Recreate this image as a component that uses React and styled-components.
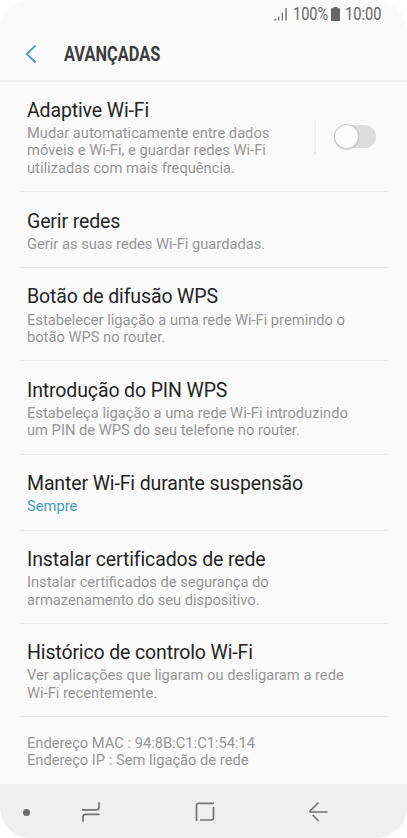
import React from "react";
import styled, { createGlobalStyle } from "styled-components";

const GlobalStyle = createGlobalStyle`
  * {
    box-sizing: border-box;
  }

  body {
    margin: 0;
    background: #fff;
    font-family: Roboto, "Liberation Sans", sans-serif;
  }
`;

const StyledPhone = styled.div`
  display: flex;
  flex-direction: column;
  width: 407px;
  height: 838px;
  overflow: hidden;
  border-radius: 31px;
  background: #fafafa;
`;

const StyledStatusBar = styled.div`
  display: flex;
  align-items: center;
  justify-content: flex-end;
  flex: none;
  height: 28px;
  padding-right: 25px;
  color: #666;
`;

const StyledStatusText = styled.span`
  width: ${(p) => p.$width}px;
  font-size: 17.5px;
  line-height: 20px;
  white-space: nowrap;

  span {
    display: inline-block;
    transform: scaleX(${(p) => p.$squeeze});
    transform-origin: left center;
  }
`;

const StyledSignal = styled.svg`
  margin-right: 5px;
`;

const StyledBattery = styled.svg`
  margin: 0 5px 0 3px;
`;

const StyledHeader = styled.header`
  display: flex;
  align-items: center;
  flex: none;
  height: 53.6px;
  padding-left: 25px;
  border-bottom: 2px solid #eee;
`;

const StyledBackIcon = styled.svg`
  margin-top: 1px;
`;

const StyledHeading = styled.h1`
  margin: 2px 0 0 27px;
  font-size: 19.5px;
  font-weight: 700;
  line-height: 24px;
  color: #3c3c3c;
  transform: scaleX(0.84);
  transform-origin: left center;
`;

const StyledList = styled.main`
  flex: 1;
  min-height: 0;
  padding: 0 20px;
`;

const StyledRow = styled.section`
  display: flex;
  padding: 17.3px 0 14px 7px;
  border-bottom: 1px solid #ebebeb;
`;

const StyledRowText = styled.div`
  flex: 1;
`;

const StyledTitle = styled.h2`
  margin: 0 0 2.2px;
  font-size: 19.5px;
  font-weight: 400;
  line-height: 24px;
  letter-spacing: -0.13px;
  color: #252525;
  white-space: nowrap;
`;

const StyledDescription = styled.p`
  margin: 0;
  font-size: 14.7px;
  line-height: 17.4px;
  color: ${(p) => (p.$active ? "#479db9" : "#969696")};
  white-space: pre;
`;

const StyledSwitchArea = styled.div`
  display: flex;
  align-items: center;
  align-self: flex-start;
  width: 73px;
  height: 34px;
  margin-top: 21px;
  padding-left: 18px;
  border-left: 2px solid #eee;
`;

const StyledSwitch = styled.button`
  display: flex;
  align-items: center;
  width: 42px;
  height: 23px;
  padding: 0;
  border: 0;
  border-radius: 12px;
  background: #dcdcdc;
`;

const StyledThumb = styled.span`
  flex: none;
  width: 25px;
  height: 25px;
  border: 1px solid #c8c8c8;
  border-radius: 50%;
  background: #fdfdfd;
  box-shadow: 0 1px 1px rgba(0, 0, 0, 0.15);
`;

const StyledAddresses = styled.div`
  padding: 17.5px 7px;
`;

const StyledNavBar = styled.nav`
  display: flex;
  align-items: center;
  flex: none;
  height: 54px;
  padding: 2px 0 0 23px;
  background: #efefef;
`;

const StyledDot = styled.span`
  flex: none;
  width: 7px;
  height: 7px;
  margin-right: 50px;
  border-radius: 50%;
  background: #6c6c6c;
`;

const StyledNavIcon = styled.svg`
  flex: none;
  width: 22px;
  height: 22px;
  margin-right: 92px;
  fill: none;
  stroke: #737373;
  stroke-width: 1.7;
`;

const settings = [
  {
    title: "Adaptive Wi-Fi",
    text: "Mudar automaticamente entre dados\nmóveis e Wi-Fi, e guardar redes Wi-Fi\nutilizadas com mais frequência.",
    hasSwitch: true,
  },
  { title: "Gerir redes", text: "Gerir as suas redes Wi-Fi guardadas." },
  {
    title: "Botão de difusão WPS",
    text: "Estabelecer ligação a uma rede Wi-Fi premindo o\nbotão WPS no router.",
  },
  {
    title: "Introdução do PIN WPS",
    text: "Estabeleça ligação a uma rede Wi-Fi introduzindo\num PIN de WPS do seu telefone no router.",
  },
  { title: "Manter Wi-Fi durante suspensão", text: "Sempre", active: true },
  {
    title: "Instalar certificados de rede",
    text: "Instalar certificados de segurança do\narmazenamento do seu dispositivo.",
  },
  {
    title: "Histórico de controlo Wi-Fi",
    text: "Ver aplicações que ligaram ou desligaram a rede\nWi-Fi recentemente.",
  },
];

const SettingRow = ({ title, text, active, hasSwitch }) => {
  return (
    <StyledRow>
      <StyledRowText>
        <StyledTitle>{title}</StyledTitle>
        <StyledDescription $active={active}>{text}</StyledDescription>
      </StyledRowText>
      {hasSwitch && (
        <StyledSwitchArea>
          <StyledSwitch role="switch" aria-checked="false">
            <StyledThumb />
          </StyledSwitch>
        </StyledSwitchArea>
      )}
    </StyledRow>
  );
};

const App = () => {
  return (
    <>
      <GlobalStyle />
      <StyledPhone>
        <StyledStatusBar>
          <StyledSignal width="15" height="14" viewBox="0 0 15 14">
            <path
              d="M0.5 13.5L3 11v2.5zM5 9.5h1.3v4H5zM8.7 5.5H10v8H8.7zM12.3 1h1.5v12.5h-1.5z"
              fill="#777"
            />
          </StyledSignal>
          <StyledStatusText $width={35} $squeeze={0.83}>
            <span>100%</span>
          </StyledStatusText>
          <StyledBattery width="9" height="14" viewBox="0 0 9 14">
            <path d="M2.5 0h4v1.3H9V14H0V1.3h2.5z" fill="#666" />
          </StyledBattery>
          <StyledStatusText $width={37} $squeeze={0.84}>
            <span>10:00</span>
          </StyledStatusText>
        </StyledStatusBar>

        <StyledHeader>
          <StyledBackIcon width="12" height="20" viewBox="0 0 12 20" fill="none">
            <path d="M10.5 1.5L1.8 10l8.7 8.5" stroke="#4a9fbd" strokeWidth="1.8" />
          </StyledBackIcon>
          <StyledHeading>AVANÇADAS</StyledHeading>
        </StyledHeader>

        <StyledList>
          {settings.map((item) => (
            <SettingRow key={item.title} {...item} />
          ))}
          <StyledAddresses>
            <StyledDescription>Endereço MAC : 94:8B:C1:C1:54:14</StyledDescription>
            <StyledDescription>Endereço IP : Sem ligação de rede</StyledDescription>
          </StyledAddresses>
        </StyledList>

        <StyledNavBar>
          <StyledDot />
          <StyledNavIcon viewBox="0 0 22 22">
            <path d="M2 8.8h14.5q2.5 0 2.5-2.5V1.3M3 20.8v-5q0-2.5 2.5-2.5h14" />
          </StyledNavIcon>
          <StyledNavIcon viewBox="0 0 22 22">
            <path d="M2.5 20V4.5q0-2.2 2.2-2.2H20M19.5 6v10.8q0 2.2-2.2 2.2H6" />
          </StyledNavIcon>
          <StyledNavIcon viewBox="0 0 22 22">
            <path d="M10.5 1.5L2 10v1h17.5M4.7 14l5.8 6" />
          </StyledNavIcon>
        </StyledNavBar>
      </StyledPhone>
    </>
  );
};

export default App;
